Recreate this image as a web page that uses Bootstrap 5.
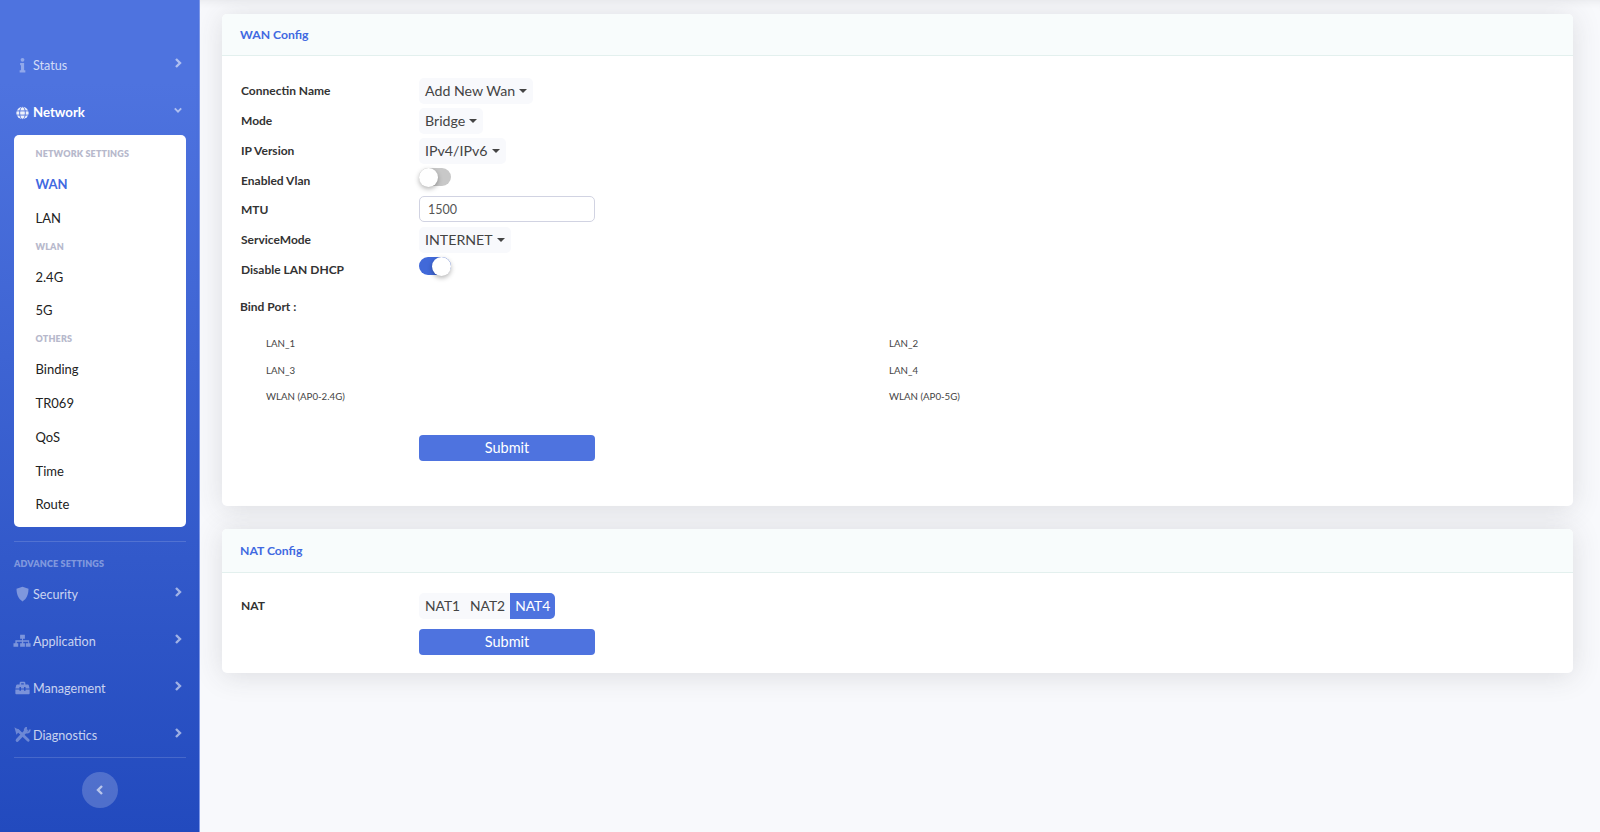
<!doctype html>
<html lang="en"><head><meta charset="utf-8"><title>WAN Config</title>
<link rel="stylesheet" href="https://cdn.jsdelivr.net/npm/bootstrap@5.3.0/dist/css/bootstrap.min.css">
<style>
html,body{height:100%}
body{font-family:"Lato","Noto Sans",sans-serif;background:#f8f9fc;color:#333;overflow:hidden}
.shell{height:832px}
.side{width:200px;flex:none;height:832px;background:linear-gradient(180deg,#4e73df 10%,#224abe 100%);border-right:1px solid #7d97e8;padding:0 13px 0 14px;color:rgba(255,255,255,.8);font-size:12.6px}
.side-item{height:47px;flex:none;display:flex;align-items:center;color:rgba(255,255,255,.75);text-decoration:none;padding-top:2px}
.side-item.on{color:#fff;font-weight:700;font-size:13.2px;height:46px;padding-top:1px}
.side-ico{width:19px;height:16px;margin-left:-1px;flex:none;margin-right:1px;margin-top:-3px;fill:rgba(255,255,255,.38)}
.on .side-ico{fill:rgba(255,255,255,.9);margin-top:0}
.side-lab{flex:1}
.chev{width:8px;height:10px;margin-right:4px;margin-top:-7px;fill:none;stroke:rgba(255,255,255,.55);stroke-width:2.4}
.on .chev{margin-top:-5px}
.sub-panel{background:#fff;border-radius:5px;height:392px;padding:12px 21px 0 21.5px;flex:none}
.sub-head{font-size:9px;font-weight:800;color:#b7b9cc;text-transform:uppercase;letter-spacing:.15px;line-height:14px}
.sub-link{display:block;color:#222;text-decoration:none;font-size:13px;height:33.8px;line-height:33.8px}
.sub-link.act{color:#4169e1;font-weight:700}
.side-rule{border-top:1px solid rgba(255,255,255,.15);flex:none}
.side-head{font-size:9px;font-weight:800;color:rgba(255,255,255,.4);text-transform:uppercase;letter-spacing:.15px;line-height:14px;padding-top:15px;height:29px;flex:none}
.back-btn{width:36px;height:36px;border-radius:50%;background:rgba(255,255,255,.2);border:0;padding:0;display:flex;align-items:center;justify-content:center;margin:14px auto 0;flex:none}
.back-btn svg{width:8px;height:10px;fill:none;stroke:rgba(255,255,255,.6);stroke-width:2.4}
.main-area{padding:14px 27px 0 22px;min-width:0;box-shadow:inset 0 8px 10px -8px rgba(58,59,69,.12)}
.cfg-card{border:0;border-radius:5px;box-shadow:0 .15rem 1.75rem 0 rgba(58,59,69,.15);margin-bottom:23px}
.cfg-card .card-header{background:#f8fcfc;border-bottom:1px solid #e3f0ee;height:42px;padding:2px 18px 0;display:flex;align-items:center;color:#4169e1;font-weight:700;font-size:12.2px}
.nat-card .card-header{height:44px}
.cfg-card .card-body{padding:22px 19px 0}
.nat-card .card-body{padding-top:20px}
.wan-card{height:492px}.nat-card{height:144px}
.frow{display:flex;margin-bottom:4px}
.flabel{width:178px;flex:none;font-weight:700;font-size:12px;color:#333;line-height:25px}
.flabel.mid{line-height:27px}
.sel{background:#f8f9fc;border:0;border-radius:5px;height:26px;padding:0 6px;font-size:14.2px;line-height:26px;color:#444;display:inline-flex;align-items:center}
.sel.dropdown-toggle::after{margin-left:4px;border-top-width:.32em;border-right-width:.32em;border-left-width:.32em;vertical-align:middle}
.frow .form-control{width:176px;height:26px;padding:1px 8px 0;font-size:12.5px;border:1px solid #d1d3e2;border-radius:5px;color:#555}
.tgl{width:32px;height:18px;border-radius:9px;background:#c8c8c8;display:flex;align-items:center;justify-content:flex-start}
.tgl.onn{background:#4169d9;justify-content:flex-end}
.tgl i{display:block;width:19px;height:19px;border-radius:50%;background:#fff;box-shadow:0 2px 5px rgba(0,0,0,.3)}
.bind-title{font-weight:700;font-size:12px;line-height:20px;margin:16px 0 16px -1px;color:#333}
.ports{display:grid;grid-template-columns:623px 1fr;grid-auto-rows:26.5px;margin-left:25px;font-size:9.7px;line-height:20px;color:#444}
.sub-btn{background:#4e73df;border:0;color:#fff;width:176px;height:26px;padding:0;font-size:14.5px;line-height:26px;border-radius:4px}
.sub-btn:hover{background:#4e73df;color:#fff}
.offset-c{margin-left:178px}
.segs .sel{border-radius:0;font-size:13.8px;padding:0 5px}.segs .sel:first-child{border-radius:5px 0 0 5px;padding-left:6px}
.segs .sel.pick{background:#4e73df;color:#fff;border-radius:0 5px 5px 0}
.tool-ico{fill:none;opacity:.32}
</style></head><body>
<div class="d-flex shell">
<nav class="side d-flex flex-column">
  <div style="height:42px;flex:none"></div>
  <a class="side-item" href="#"><svg class="side-ico" viewBox="0 0 20 16"><circle cx="10" cy="2.500" r="2"/><path d="M7.500 6h4.200v7.600H13V16H7v-2.400h1.400V8.200H7.500z"/></svg><span class="side-lab">Status</span><svg class="chev" viewBox="0 0 8 10"><path d="M2 1l4 4-4 4"/></svg></a>
  <a class="side-item on" href="#"><svg class="side-ico" viewBox="0 0 20 16"><circle cx="10" cy="8" r="6.500"/><g fill="none" stroke="#4a6dda" stroke-width=".9"><ellipse cx="10" cy="8" rx="3" ry="6.500"/><path d="M3.500 5.800h13M3.500 10.200h13"/></g></svg><span class="side-lab">Network</span><svg class="chev" viewBox="0 0 10 10"><path d="M1 3l4 4 4-4"/></svg></a>
  <div class="sub-panel">
    <div class="sub-head">Network Settings</div>
    <a class="sub-link act" href="#" style="margin-top:7px">WAN</a>
    <a class="sub-link" href="#">LAN</a>
    <div class="sub-head" style="margin-top:4px">WLAN</div>
    <a class="sub-link" href="#" style="margin-top:7px">2.4G</a>
    <a class="sub-link" href="#">5G</a>
    <div class="sub-head" style="margin-top:4px">Others</div>
    <a class="sub-link" href="#" style="margin-top:7px">Binding</a>
    <a class="sub-link" href="#">TR069</a>
    <a class="sub-link" href="#">QoS</a>
    <a class="sub-link" href="#">Time</a>
    <a class="sub-link" href="#">Route</a>
  </div>
  <div class="side-rule" style="margin-top:14px"></div>
  <div class="side-head">Advance Settings</div>
  <a class="side-item" href="#"><svg class="side-ico" viewBox="0 0 20 16"><path d="M10 .3l6.300 2.300c0 6-1.900 10.800-6.300 13.200C5.600 13.400 3.700 8.600 3.700 2.600z"/></svg><span class="side-lab">Security</span><svg class="chev" viewBox="0 0 8 10"><path d="M2 1l4 4-4 4"/></svg></a>
  <a class="side-item" href="#"><svg class="side-ico" viewBox="0 0 20 16"><path d="M7.500 1.500h5v4.200h-2v1.600h6.500v3h1.500V14h-5v-3.700H16V8.800h-5.200v1.500h1.700V14h-5v-3.700h1.800V8.800H4v1.500h1.500V14h-5v-3.700H2.500v-3h7v-1.600h-2z"/></svg><span class="side-lab">Application</span><svg class="chev" viewBox="0 0 8 10"><path d="M2 1l4 4-4 4"/></svg></a>
  <a class="side-item" href="#"><svg class="side-ico" viewBox="0 0 20 16"><path d="M7 4.200V2.800C7 2 7.700 1.400 8.400 1.400h3.200c.8 0 1.400.6 1.400 1.400v1.400h2.500c.6 0 1 .4 1.100.9l.9 3.300h-4.300V7h-1.600v1.400H8.400V7H6.800v1.400H2.500l.9-3.300c.1-.5.500-.9 1.100-.9zm1.600 0h2.800V3H8.600zM2.500 9.600h4.300v1.300h1.600V9.600h3.200v1.300h1.600V9.600h4.300v4c0 .6-.5 1-1 1h-13c-.5 0-1-.4-1-1z"/></svg><span class="side-lab">Management</span><svg class="chev" viewBox="0 0 8 10"><path d="M2 1l4 4-4 4"/></svg></a>
  <a class="side-item" href="#"><svg class="side-ico" viewBox="0 0 20 16"><g class="tool-ico" stroke="#fff"><path d="M5 3l11 10.500" stroke-width="3" stroke-linecap="round"/><path d="M2.800 1.500L6 3.500 4 6z" stroke-width="1.600" fill="#fff"/><path d="M14 3.500L4.500 13.500" stroke-width="3.400" stroke-linecap="round"/><path d="M17.500 2.200c.3 2-1 3.600-3 3.300-1.800-.3-2.600-2.300-1.800-3.800.4-.8 1.200-1.300 2-1.300" stroke-width="2"/></g></svg><span class="side-lab">Diagnostics</span><svg class="chev" viewBox="0 0 8 10"><path d="M2 1l4 4-4 4"/></svg></a>
  <div class="side-rule" style="margin-top:-2px"></div>
  <button class="back-btn" type="button" aria-label="Collapse"><svg viewBox="0 0 8 10"><path d="M6 1L2 5l4 4"/></svg></button>
</nav>
<main class="flex-grow-1 main-area">
  <section class="card cfg-card wan-card">
    <div class="card-header">WAN Config</div>
    <div class="card-body">
      <div class="frow"><div class="flabel">Connectin Name</div><button class="btn sel dropdown-toggle" type="button">Add New Wan</button></div>
      <div class="frow"><div class="flabel">Mode</div><button class="btn sel dropdown-toggle" type="button">Bridge</button></div>
      <div class="frow"><div class="flabel">IP Version</div><button class="btn sel dropdown-toggle" type="button">IPv4/IPv6</button></div>
      <div class="frow" style="height:24px"><div class="flabel">Enabled Vlan</div><div class="tgl"><i></i></div></div>
      <div class="frow"><div class="flabel mid">MTU</div><input class="form-control" value="1500" aria-label="MTU"></div>
      <div class="frow"><div class="flabel">ServiceMode</div><button class="btn sel dropdown-toggle" type="button">INTERNET</button></div>
      <div class="frow" style="height:24px"><div class="flabel">Disable LAN DHCP</div><div class="tgl onn"><i></i></div></div>
      <div class="bind-title">Bind Port :</div>
      <div class="ports"><div>LAN_1</div><div>LAN_2</div><div>LAN_3</div><div>LAN_4</div><div>WLAN (AP0-2.4G)</div><div>WLAN (AP0-5G)</div></div>
      <div class="offset-c" style="margin-top:22px"><button class="btn sub-btn" type="button">Submit</button></div>
    </div>
  </section>
  <section class="card cfg-card nat-card">
    <div class="card-header">NAT Config</div>
    <div class="card-body">
      <div class="frow" style="margin-bottom:9px"><div class="flabel">NAT</div><div class="d-flex segs"><button class="btn sel" type="button">NAT1</button><button class="btn sel" type="button">NAT2</button><button class="btn sel pick" type="button">NAT4</button></div></div>
      <div class="offset-c"><button class="btn sub-btn" type="button">Submit</button></div>
    </div>
  </section>
</main>
</div>
<script src="https://cdn.jsdelivr.net/npm/bootstrap@5.3.0/dist/js/bootstrap.bundle.min.js"></script>
</body></html>
